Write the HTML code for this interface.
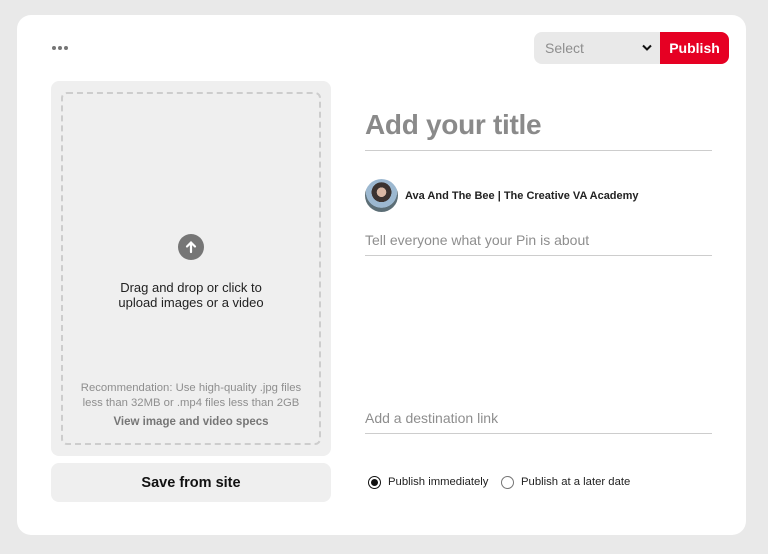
<!DOCTYPE html>
<html><head><style>
*{margin:0;padding:0;box-sizing:border-box}
body{width:768px;height:554px;background:#e9e9e9;font-family:"Liberation Sans",sans-serif;position:relative;overflow:hidden}
.card{position:absolute;left:17px;top:15px;width:729px;height:520px;background:#fff;border-radius:14px}
.a{position:absolute}
.dots{left:52px;top:46px;display:flex;gap:2px}
.dots span{width:4px;height:4px;border-radius:50%;background:#767676;display:block}
.sel{left:534px;top:32px;width:127px;height:32px;background:#e9e9e9;border-radius:8px 0 0 8px;color:#8e8e8e;font-size:14px;line-height:32px;padding-left:11px}
.pub{left:660px;top:32px;width:69px;height:32px;background:#e60023;border-radius:0 8px 8px 0;color:#fff;font-weight:bold;font-size:14px;line-height:32px;text-align:center}
.up{left:51px;top:81px;width:280px;height:375px;background:#efefef;border-radius:8px}
.dash{left:61px;top:92px;width:260px;height:353px;border:2px dashed #cdcdcd;border-radius:6px}
.c{text-align:center;width:280px;left:51px}
.save{left:51px;top:463px;width:280px;height:39px;background:#efefef;border-radius:8px;font-weight:bold;font-size:14.5px;line-height:40px;text-align:center;color:#111}
.line{height:1px;background:#cdcdcd;left:365px;width:347px}
.ph{left:365px;color:#8e8e8e;font-size:14px}
.radio{width:13px;height:13px;border-radius:50%;border:1px solid #767676;top:476px}
</style></head><body>
<div class="card"></div>
<div class="a dots"><span></span><span></span><span></span></div>
<div class="a sel">Select<svg style="position:absolute;left:108px;top:12px" width="10" height="8" viewBox="0 0 10 8"><path d="M1 1.5L5 5.5L9 1.5" stroke="#111" stroke-width="2" fill="none"/></svg></div>
<div class="a pub">Publish</div>
<div class="a up"></div>
<div class="a dash"></div>
<svg class="a" style="left:178px;top:234px" width="26" height="26" viewBox="0 0 26 26"><circle cx="13" cy="13" r="13" fill="#767676"/><path d="M13 18V9M9 12.5L13 8.5L17 12.5" stroke="#fff" stroke-width="2.2" fill="none" stroke-linecap="round"/></svg>
<div class="a c" style="top:280px;font-size:13px;line-height:15px;color:#222">Drag and drop or click to<br>upload images or a video</div>
<div class="a c" style="top:381px;font-size:11.3px;line-height:15px;color:#8e8e8e">Recommendation: Use high-quality .jpg files<br>less than 32MB or .mp4 files less than 2GB</div>
<div class="a c" style="top:416px;font-size:11.5px;font-weight:bold;color:#767676">View image and video specs</div>
<div class="a save">Save from site</div>
<div class="a" style="left:365px;top:109px;font-size:28px;font-weight:bold;color:#8a8a8a;letter-spacing:-0.3px">Add your title</div>
<div class="a line" style="top:150px"></div>
<div class="a" style="left:365px;top:179px;width:33px;height:33px;border-radius:50%;background:radial-gradient(circle at 50% 40%,#d9b8a4 0 18%,#3b3330 19% 38%,#9cb8d0 39% 60%,#5c6e76 61%)"></div>
<div class="a" style="left:405px;top:190px;font-size:11px;font-weight:bold;color:#222">Ava And The Bee | The Creative VA Academy</div>
<div class="a ph" style="top:232px">Tell everyone what your Pin is about</div>
<div class="a line" style="top:255px"></div>
<div class="a ph" style="top:410px">Add a destination link</div>
<div class="a line" style="top:433px"></div>
<div class="a radio" style="left:368px;border-color:#111"><div style="width:7px;height:7px;border-radius:50%;background:#111;margin:2px"></div></div>
<div class="a" style="left:388px;top:476px;font-size:11.3px;color:#222">Publish immediately</div>
<div class="a radio" style="left:501px"></div>
<div class="a" style="left:521px;top:476px;font-size:11.3px;color:#222">Publish at a later date</div>
</body></html>
